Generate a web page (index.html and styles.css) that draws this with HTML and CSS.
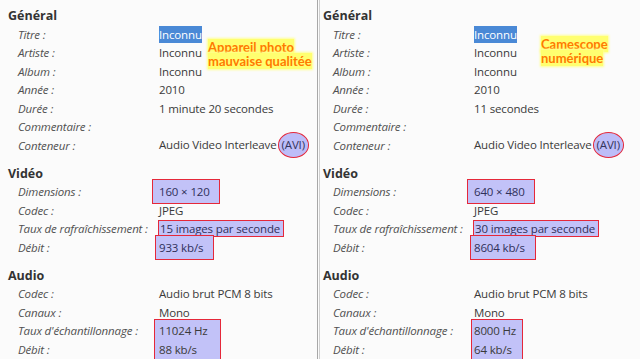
FILE: index.html
```html
<!DOCTYPE html>
<html>
<head>
  <title>Propriétés AVI</title>
  <meta name="viewport" content="width=device-width, initial-scale=1">
  <link rel="stylesheet" href="styles.css">
</head>
<body>
  <div class="page">
    <div class="panel panel-left">
      <div class="note note-left"><span>Appareil photo</span><br><span>mauvaise qualitée</span></div>
      <div class="group">
        <h3>Général</h3>
        <div class="rows">
          <span class="label">Titre :</span><span class="value"><span class="sel">Inconnu</span></span>
          <span class="label">Artiste :</span><span class="value">Inconnu</span>
          <span class="label">Album :</span><span class="value">Inconnu</span>
          <span class="label">Année :</span><span class="value">2010</span>
          <span class="label">Durée :</span><span class="value">1 minute 20 secondes</span>
          <span class="label">Commentaire :</span><span class="value"></span>
          <span class="label">Conteneur :</span><span class="value">Audio Video Interleave<span class="ring">(AVI)</span></span>
        </div>
      </div>
      <div class="group">
        <h3>Vidéo</h3>
        <div class="rows">
          <span class="label">Dimensions :</span><span class="value"><span class="mark mark-wide">160 × 120</span></span>
          <span class="label">Codec :</span><span class="value">JPEG</span>
          <span class="label">Taux de rafraîchissement :</span><span class="value"><span class="mark mark-tight">15 images par seconde</span></span>
          <span class="label">Débit :</span><span class="value"><span class="mark mark-rate">933 kb/s</span></span>
        </div>
      </div>
      <div class="group">
        <h3>Audio</h3>
        <div class="rows">
          <span class="label">Codec :</span><span class="value">Audio brut PCM 8 bits</span>
          <span class="label">Canaux :</span><span class="value">Mono</span>
          <div class="block-mark block-left"></div>
          <span class="label">Taux d'échantillonnage :</span><span class="value row-3">11024 Hz</span>
          <span class="label">Débit :</span><span class="value row-4">88 kb/s</span>
        </div>
      </div>
    </div>

    <div class="panel panel-right">
      <div class="note note-right"><span>Camescope</span><br><span>numérique</span></div>
      <div class="group">
        <h3>Général</h3>
        <div class="rows">
          <span class="label">Titre :</span><span class="value"><span class="sel">Inconnu</span></span>
          <span class="label">Artiste :</span><span class="value">Inconnu</span>
          <span class="label">Album :</span><span class="value">Inconnu</span>
          <span class="label">Année :</span><span class="value">2010</span>
          <span class="label">Durée :</span><span class="value">11 secondes</span>
          <span class="label">Commentaire :</span><span class="value"></span>
          <span class="label">Conteneur :</span><span class="value">Audio Video Interleave<span class="ring">(AVI)</span></span>
        </div>
      </div>
      <div class="group">
        <h3>Vidéo</h3>
        <div class="rows">
          <span class="label">Dimensions :</span><span class="value"><span class="mark mark-wide">640 × 480</span></span>
          <span class="label">Codec :</span><span class="value">JPEG</span>
          <span class="label">Taux de rafraîchissement :</span><span class="value"><span class="mark mark-tight">30 images par seconde</span></span>
          <span class="label">Débit :</span><span class="value"><span class="mark mark-rate">8604 kb/s</span></span>
        </div>
      </div>
      <div class="group">
        <h3>Audio</h3>
        <div class="rows">
          <span class="label">Codec :</span><span class="value">Audio brut PCM 8 bits</span>
          <span class="label">Canaux :</span><span class="value">Mono</span>
          <div class="block-mark block-right"></div>
          <span class="label">Taux d'échantillonnage :</span><span class="value row-3">8000 Hz</span>
          <span class="label">Débit :</span><span class="value row-4">64 kb/s</span>
        </div>
      </div>
    </div>
  </div>
</body>
</html>
```

FILE: styles.css
```css
body {
  margin: 0;
  padding: 0;
  background: #fbfbfb;
  font-family: "Open Sans", "Noto Sans", sans-serif;
  font-size: 11.5px;
  letter-spacing: -0.15px;
  color: #3a3a3a;
}
.page {
  display: flex;
  width: 640px;
  height: 359px;
  overflow: hidden;
}
.panel {
  position: relative;
  box-sizing: border-box;
  padding-top: 6px;
}
.panel-left {
  width: 318px;
  padding-left: 8px;
  border-right: 1px solid #a8a8a8;
}
.panel-right {
  flex: 1;
  margin-left: 1px;
  padding-left: 3px;
  border-left: 1px solid #d0d0d0;
}
.group {
  margin-bottom: 9px;
}
h3 {
  margin: 0;
  font-size: 12.5px;
  font-weight: 700;
  letter-spacing: 0;
  color: #333;
  line-height: 19px;
}
.rows {
  display: grid;
  grid-template-columns: 141px auto;
  grid-auto-rows: 18.5px;
  align-items: center;
  padding-left: 10px;
}
.label {
  grid-column: 1;
  font-style: italic;
  color: #505050;
  white-space: nowrap;
}
.value {
  white-space: nowrap;
  position: relative;
  z-index: 1;
}
.row-3 {
  grid-column: 2;
  grid-row: 3;
}
.row-4 {
  grid-column: 2;
  grid-row: 4;
}
.sel {
  background: #4a89d6;
  color: #fff;
  padding: 1px 0;
}
.ring {
  display: inline-block;
  margin-left: 1px;
  padding: 6px 3px;
  line-height: 12px;
  border: 1.5px solid #e5283a;
  border-radius: 50%;
  background: #bdbdf8;
  color: #34345c;
}
.mark {
  background: #c2c2f8;
  border: 1.5px solid #e5283a;
  color: #30305a;
}
.mark-wide {
  padding: 4px 9px 4px 6px;
  margin-left: -7px;
}
.mark-tight {
  padding: 0 3px 0 1px;
  margin-left: -1px;
}
.mark-rate {
  padding: 4px 10px 4px 3px;
  margin-left: -4px;
}
.block-mark {
  grid-column: 2;
  grid-row: 3 / 5;
  justify-self: start;
  align-self: stretch;
  margin: -3px 0 -3px -5px;
  background: #c2c2f8;
  border: 1.5px solid #e5283a;
  z-index: 0;
}
.block-left {
  width: 65px;
}
.block-right {
  width: 50px;
  margin-left: -3px;
}
.note {
  position: absolute;
  font-family: Lato, "Open Sans", sans-serif;
  font-weight: 700;
  font-size: 13px;
  letter-spacing: 0;
  line-height: 13.5px;
  color: #ff7a00;
  z-index: 2;
}
.note span {
  background: #ffff70;
  box-shadow: 0 0 2px 1px #ffff90;
}
.note-left {
  left: 208px;
  top: 41px;
}
.note-right {
  left: 221px;
  top: 38px;
}
```
